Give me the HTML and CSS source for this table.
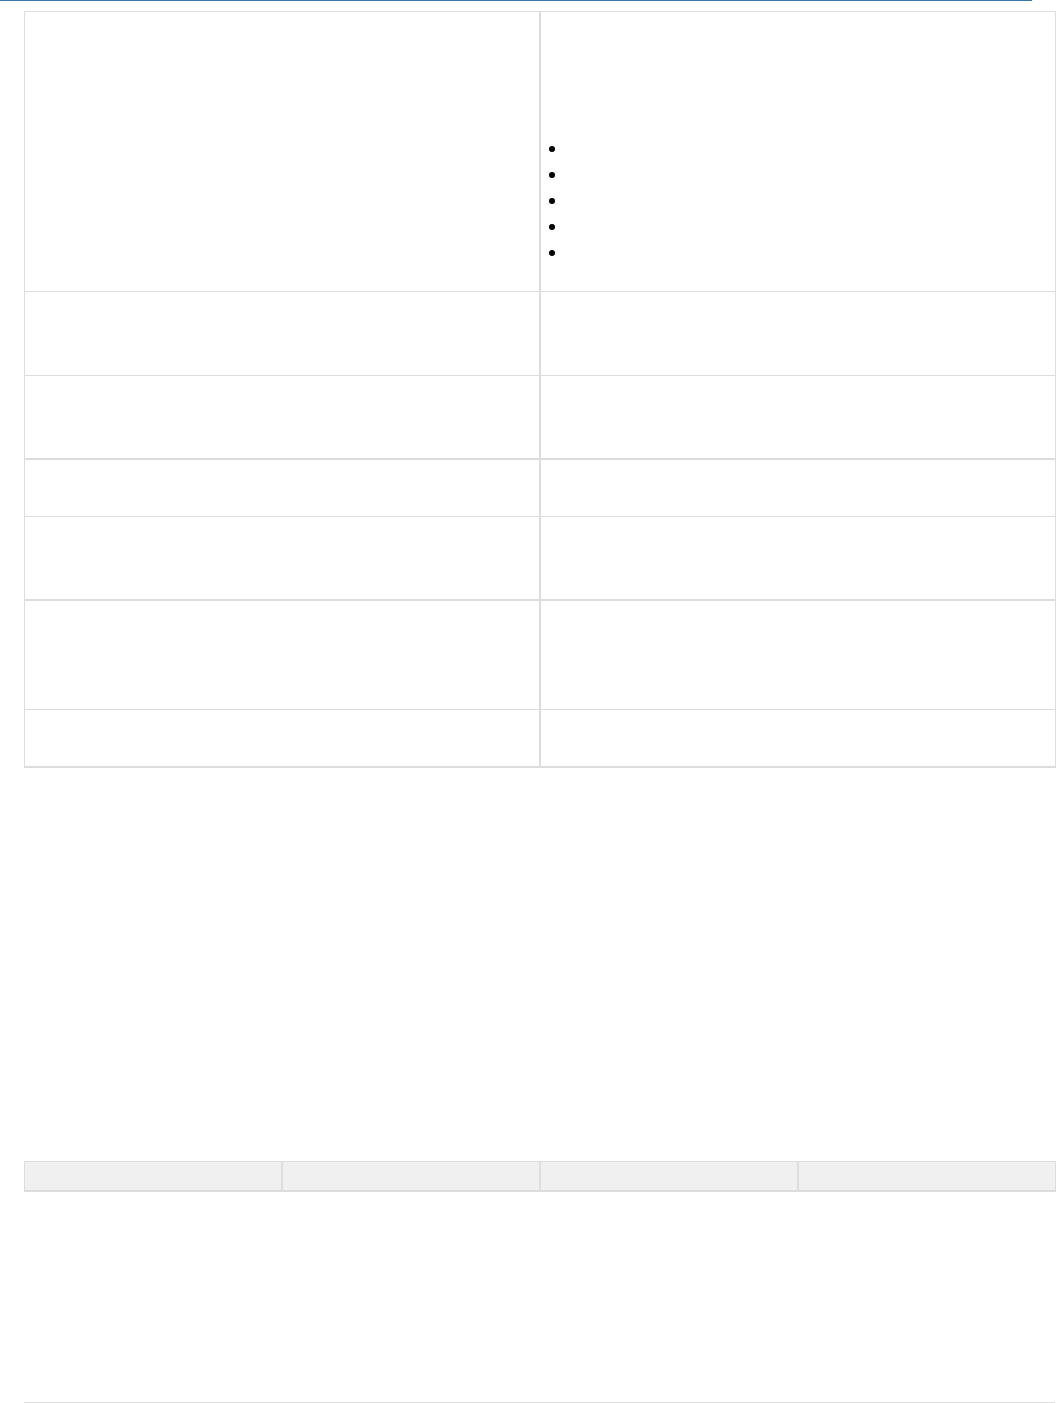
FILE: index.html
```html
<!DOCTYPE html>
<html>
<head>
<meta charset="utf-8">
<link rel="stylesheet" href="styles.css">
</head>
<body>
<div class="topbar"></div>
<main class="content">
  <table class="wiki-table main-table">
    <tbody>
      <tr class="r1">
        <td class="c-left"></td>
        <td class="c-right">
          <ul class="bullets">
            <li>&nbsp;</li>
            <li>&nbsp;</li>
            <li>&nbsp;</li>
            <li>&nbsp;</li>
            <li>&nbsp;</li>
          </ul>
        </td>
      </tr>
      <tr class="r2"><td class="c-left"></td><td class="c-right"></td></tr>
      <tr class="r3"><td class="c-left"></td><td class="c-right"></td></tr>
      <tr class="r4 thick-top"><td class="c-left"></td><td class="c-right"></td></tr>
      <tr class="r5"><td class="c-left"></td><td class="c-right"></td></tr>
      <tr class="r6 thick-top"><td class="c-left"></td><td class="c-right"></td></tr>
      <tr class="r7 thick-bottom"><td class="c-left"></td><td class="c-right"></td></tr>
    </tbody>
  </table>

  <table class="wiki-table head-table">
    <thead>
      <tr>
        <th class="h-cell"></th>
        <th class="h-cell"></th>
        <th class="h-cell"></th>
        <th class="h-cell last"></th>
      </tr>
    </thead>
  </table>

  <div class="footer-rule"></div>
</main>
</body>
</html>
```

FILE: styles.css
```css
html, body {
  margin: 0;
  padding: 0;
  background: #ffffff;
  font-family: Arial, "Liberation Sans", sans-serif;
  font-size: 14px;
  color: #333333;
}

.topbar {
  width: 1032px;
  height: 1px;
  background: #3b73af;
}

.content {
  padding: 10px 0 0 24px;
  width: 1032px;
}

.wiki-table {
  border-collapse: collapse;
  width: 1032px;
  table-layout: fixed;
}

.wiki-table td,
.wiki-table th {
  border: 1px solid #dddddd;
  padding: 0 10px;
  vertical-align: top;
}

.main-table .c-left {
  width: 494px;
  border-right: 2px solid #dddddd;
}

.main-table .r1 { height: 280px; }
.main-table .r2 { height: 84px; }
.main-table .r3 { height: 83px; }
.main-table .r4 { height: 58px; }
.main-table .r5 { height: 83px; }
.main-table .r6 { height: 110px; }
.main-table .r7 { height: 57px; }

.main-table .thick-top td { border-top: 2px solid #dddddd; }
.main-table .thick-bottom td { border-bottom: 2px solid #dddddd; }

.bullets {
  list-style: none;
  margin: 124px 0 0 0;
  padding: 0;
}

.bullets li {
  position: relative;
  height: 26px;
  line-height: 26px;
  padding-left: 18px;
}

.bullets li::before {
  content: "";
  position: absolute;
  left: -2px;
  top: 10px;
  width: 6px;
  height: 6px;
  border-radius: 50%;
  background: #000000;
}

.head-table {
  margin-top: 393px;
}

.head-table .h-cell {
  height: 28px;
  background: #f0f0f0;
  border-right: 2px solid #dddddd;
  border-bottom: 2px solid #dddddd;
}

.head-table .h-cell.last {
  border-right: 1px solid #dddddd;
}

.footer-rule {
  margin-top: 210px;
  width: 1031px;
  height: 1px;
  background: #dddddd;
}
```
